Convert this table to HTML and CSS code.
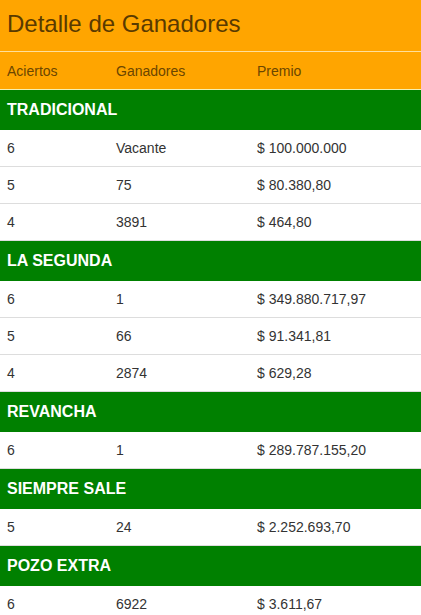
FILE: index.html
```html
<!DOCTYPE html>
<html lang="es">
<head>
<meta charset="utf-8">
<title>Detalle de Ganadores</title>
<link rel="stylesheet" href="styles.css">
</head>
<body>
<div class="panel">
  <header class="title-bar"><h1 class="title">Detalle de Ganadores</h1></header>
  <div class="row head-row"><span>Aciertos</span><span>Ganadores</span><span>Premio</span></div>

  <div class="section">TRADICIONAL</div>
  <div class="row data"><span>6</span><span>Vacante</span><span>$ 100.000.000</span></div>
  <div class="row data"><span>5</span><span>75</span><span>$ 80.380,80</span></div>
  <div class="row data"><span>4</span><span>3891</span><span>$ 464,80</span></div>

  <div class="section">LA SEGUNDA</div>
  <div class="row data"><span>6</span><span>1</span><span>$ 349.880.717,97</span></div>
  <div class="row data"><span>5</span><span>66</span><span>$ 91.341,81</span></div>
  <div class="row data"><span>4</span><span>2874</span><span>$ 629,28</span></div>

  <div class="section">REVANCHA</div>
  <div class="row data"><span>6</span><span>1</span><span>$ 289.787.155,20</span></div>

  <div class="section">SIEMPRE SALE</div>
  <div class="row data"><span>5</span><span>24</span><span>$ 2.252.693,70</span></div>

  <div class="section">POZO EXTRA</div>
  <div class="row data"><span>6</span><span>6922</span><span>$ 3.611,67</span></div>
</div>
</body>
</html>
```
FILE: styles.css
```css
html, body {
  margin: 0;
  padding: 0;
  background: #ffffff;
}
body {
  font-family: "Liberation Sans", Arial, sans-serif;
  font-size: 14px;
  color: #333333;
}
.panel {
  display: flex;
  flex-direction: column;
}
.title-bar {
  background: #ffa500;
  height: 51px;
  border-bottom: 1px solid #ffdf9a;
  display: flex;
  align-items: center;
  padding: 0 7px;
}
.title {
  margin: 0;
  font-weight: normal;
  font-size: 24px;
  color: #593a00;
  line-height: 1;
  position: relative;
  top: -2px;
}
.row {
  display: grid;
  grid-template-columns: 109px 141px 1fr;
  align-items: center;
  padding-left: 7px;
}
.head-row {
  background: #ffa500;
  color: #6b4600;
  height: 37px;
  border-bottom: 1px solid #f5f0b0;
}
.section {
  background: #008000;
  color: #ffffff;
  font-weight: bold;
  font-size: 16px;
  height: 40px;
  display: flex;
  align-items: center;
  padding-left: 7px;
}
.data {
  height: 36px;
  border-bottom: 1px solid #dddddd;
}
```
